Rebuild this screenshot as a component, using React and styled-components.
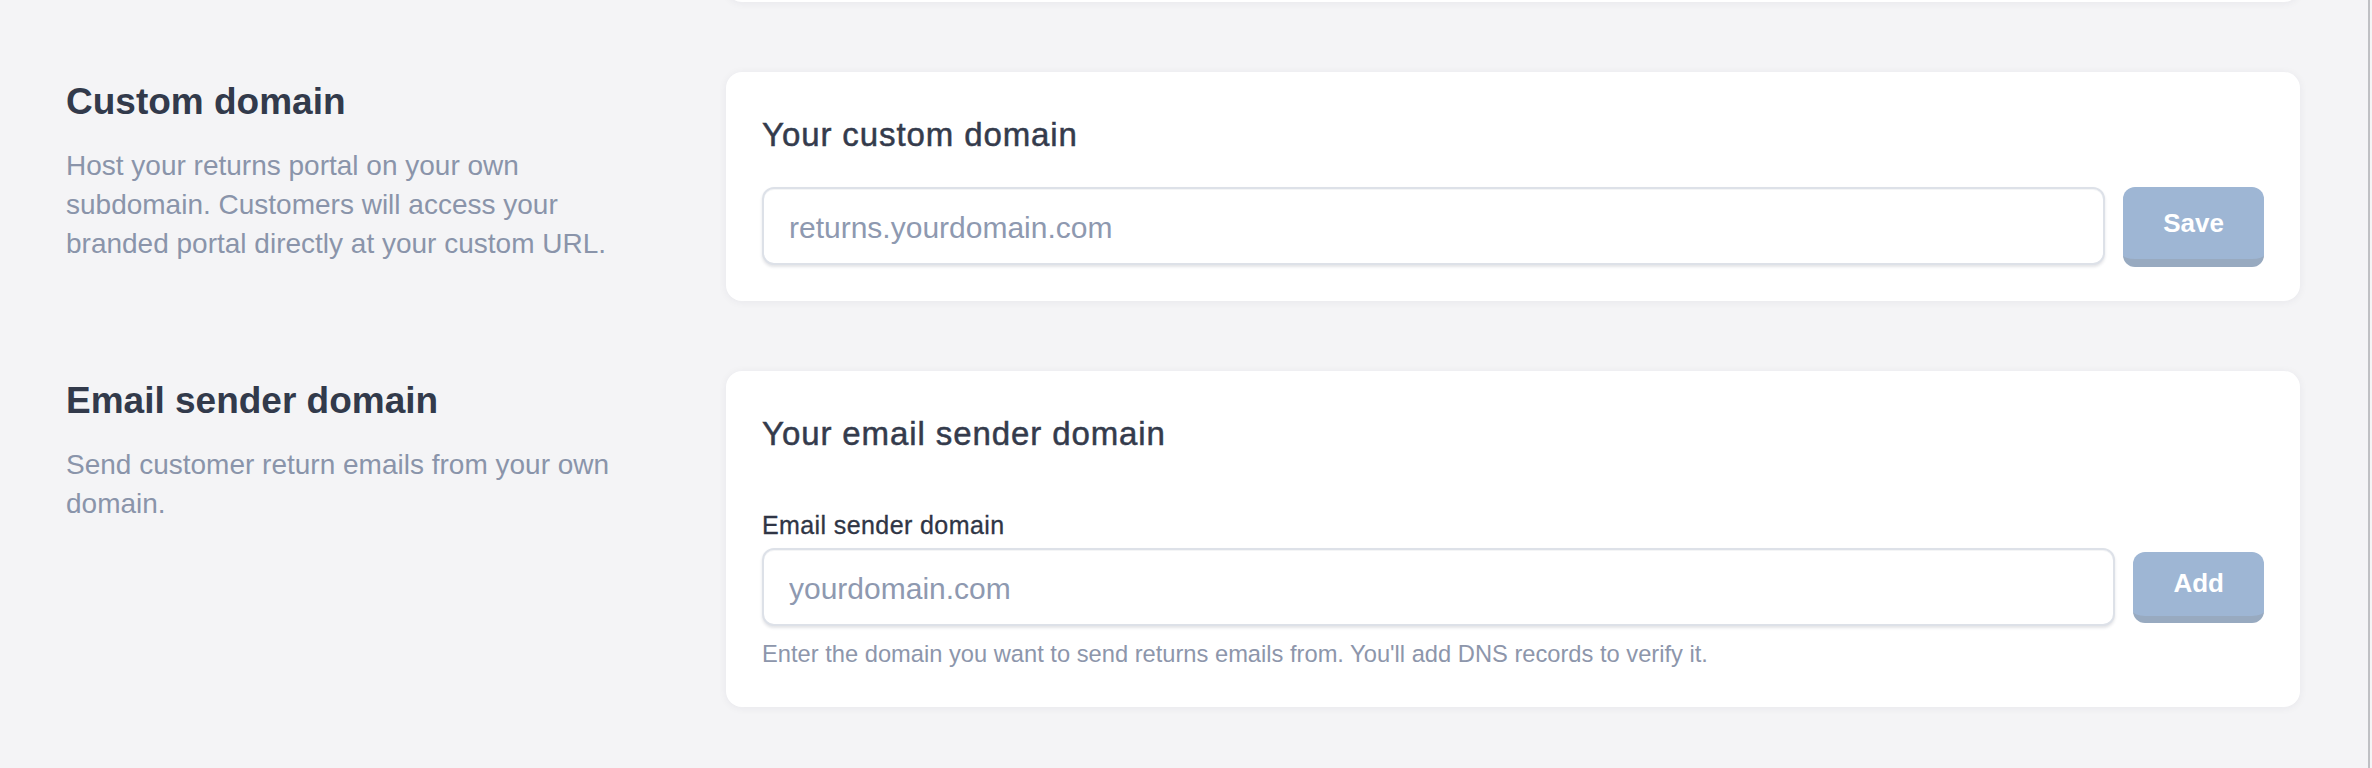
import React from "react";
import styled, { createGlobalStyle } from "styled-components";

const GlobalStyle = createGlobalStyle`
  * {
    box-sizing: border-box;
  }
  html,
  body {
    margin: 0;
    background: #f4f4f6;
  }
  body {
    font-family: "Liberation Sans", Arial, sans-serif;
  }
`;

const Page = styled.main`
  width: 2370px;
  min-height: 100vh;
  padding: 0 68px 40px 66px;
  border-right: 2px solid #bfc0c4;
  display: flex;
  flex-direction: column;
  gap: 70px;
`;

const Section = styled.section`
  display: flex;
  align-items: flex-start;
  gap: 88px;
  margin-top: ${(p) => (p.$stub ? "-38px" : "0")};
`;

const Aside = styled.div`
  flex: none;
  width: 572px;
  padding-top: 7px;
`;

const Heading = styled.h2`
  margin: 0;
  font-size: 37px;
  line-height: 46px;
  font-weight: 700;
  color: #323a4b;
`;

const Description = styled.p`
  margin: 21px 0 0;
  font-size: 28px;
  line-height: 39px;
  color: #8a94aa;
`;

const Card = styled.div`
  flex: 1;
  background: #ffffff;
  border-radius: 16px;
  box-shadow: 0 1px 8px rgba(30, 40, 60, 0.06);
  padding: 43px 36px ${(p) => p.$bottom || "34px"};
`;

/* bottom edge of the settings block above this one */
const StubCard = styled(Card)`
  height: 40px;
  padding: 0;
`;

const CardTitle = styled.h3`
  margin: 0 0 ${(p) => p.$gap || "32px"};
  font-size: 33px;
  line-height: 40px;
  font-weight: 400;
  letter-spacing: 0.9px;
  -webkit-text-stroke: 0.5px #343b4c;
  color: #343b4c;
`;

const Label = styled.label`
  display: block;
  margin-bottom: 7px;
  font-size: 25px;
  line-height: 32px;
  letter-spacing: 0.4px;
  -webkit-text-stroke: 0.3px #2f3545;
  color: #2f3545;
`;

const FieldRow = styled.div`
  display: flex;
  align-items: ${(p) => p.$align || "flex-start"};
  gap: 18px;
`;

const Input = styled.input`
  flex: 1;
  min-width: 0;
  height: 78px;
  padding: 4px 25px 0;
  border: 2px solid #dde1e8;
  border-radius: 12px;
  background: #ffffff;
  box-shadow: inset 0 1px 0 rgba(40, 50, 70, 0.05),
    0 2px 3px rgba(40, 50, 70, 0.13);
  font-family: inherit;
  font-size: 30px;
  color: #2d3748;
  outline: none;

  &::placeholder {
    color: #8e99b0;
  }
`;

const Button = styled.button`
  flex: none;
  height: ${(p) => p.$height || "80px"};
  padding: 0 40px;
  border: none;
  border-bottom: ${(p) => p.$depth || "8px"} solid #98aac0;
  border-radius: 12px;
  background: #9eb6d4;
  font-family: inherit;
  font-size: 26px;
  font-weight: 700;
  color: #ffffff;
  cursor: pointer;
`;

const Hint = styled.p`
  margin: 13px 0 0;
  font-size: 23.7px;
  line-height: 30px;
  color: #8d96ab;
`;

const App = () => {
  return (
    <>
      <GlobalStyle />
      <Page>
        <Section $stub>
          <Aside />
          <StubCard />
        </Section>

        <Section>
          <Aside>
            <Heading>Custom domain</Heading>
            <Description>
              Host your returns portal on your own subdomain. Customers will
              access your branded portal directly at your custom URL.
            </Description>
          </Aside>
          <Card>
            <CardTitle>Your custom domain</CardTitle>
            <FieldRow>
              <Input type="text" placeholder="returns.yourdomain.com" />
              <Button>Save</Button>
            </FieldRow>
          </Card>
        </Section>

        <Section>
          <Aside>
            <Heading>Email sender domain</Heading>
            <Description>
              Send customer return emails from your own domain.
            </Description>
          </Aside>
          <Card $bottom="38px">
            <CardTitle $gap="55px">Your email sender domain</CardTitle>
            <Label htmlFor="sender-domain">Email sender domain</Label>
            <FieldRow $align="center">
              <Input
                id="sender-domain"
                type="text"
                placeholder="yourdomain.com"
              />
              <Button $height="71px" $depth="7px">
                Add
              </Button>
            </FieldRow>
            <Hint>
              Enter the domain you want to send returns emails from. You'll add
              DNS records to verify it.
            </Hint>
          </Card>
        </Section>
      </Page>
    </>
  );
};

export default App;
